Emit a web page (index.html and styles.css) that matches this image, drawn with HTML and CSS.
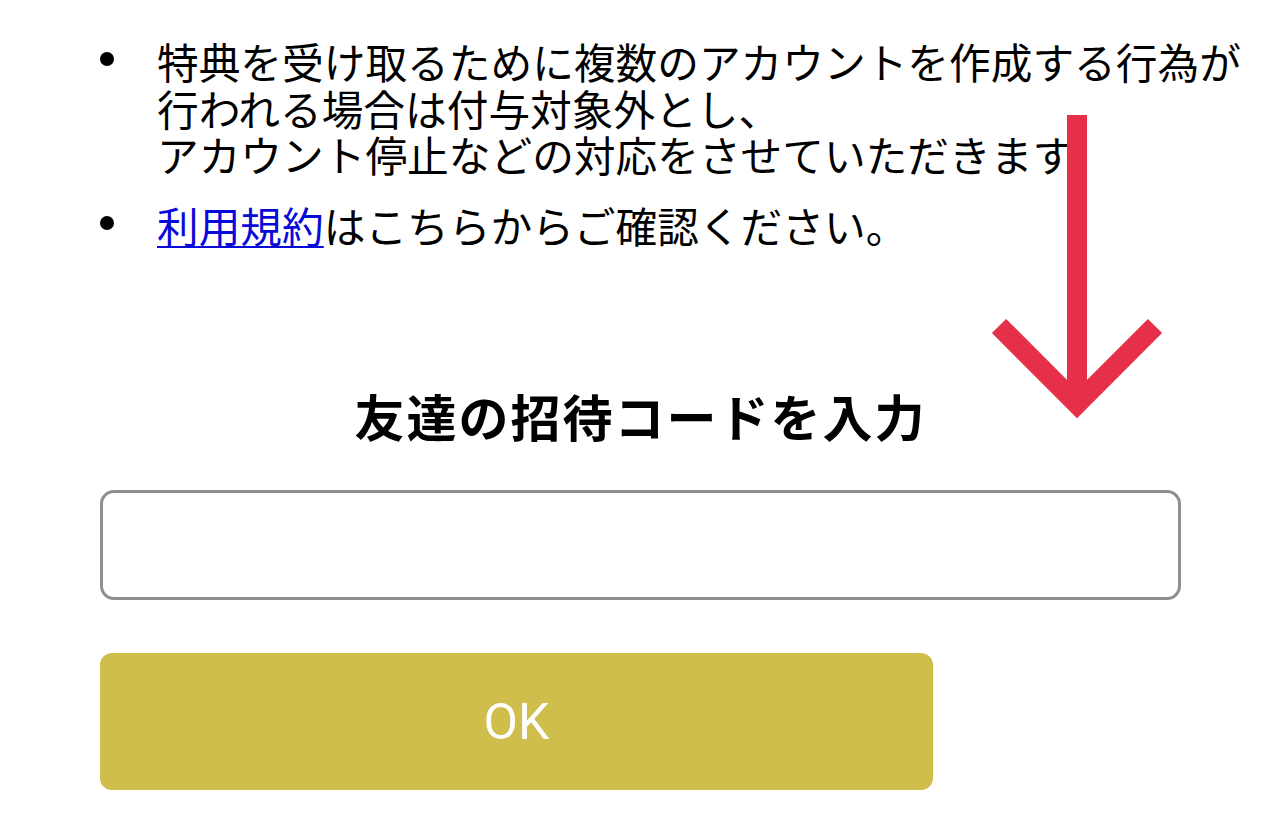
FILE: index.html
```html
<!DOCTYPE html>
<html lang="ja">

<head>
    <meta charset="UTF-8">
    <meta name="viewport" content="width=device-width, initial-scale=1.0">
    <title>友達の招待コード</title>
    <link rel="stylesheet" href="styles.css">
</head>

<body>
    <div class="page">
        <ul class="notes">
            <li>
                <span>特典を受け取るために複数のアカウントを作成する行為が<br>行われる場合は付与対象外とし、<br>アカウント停止などの対応をさせていただきます</span>
            </li>
            <li>
                <span><a href="#" class="notes-link">利用規約</a>はこちらからご確認ください。</span>
            </li>
        </ul>

        <div class="invite-form">
            <h2 class="invite-title">友達の招待コードを入力</h2>
            <input type="text" class="invite-input">
            <button class="invite-btn">OK</button>
        </div>

        <svg class="hint-arrow" width="200" height="330" viewBox="0 0 200 330">
            <line x1="97" y1="15" x2="97" y2="300" stroke="#e6304a" stroke-width="20" />
            <polyline points="19,226 97,304 175,226" fill="none" stroke="#e6304a" stroke-width="20"
                stroke-linejoin="miter" stroke-linecap="butt" />
        </svg>
    </div>
</body>

</html>
```

FILE: styles.css
```css
body {
    margin: 0;
    background: #fff;
    color: #000;
    font-family: "Noto Sans CJK JP", "Noto Sans", sans-serif;
}

.page {
    position: relative;
    width: 1280px;
    height: 838px;
    overflow: hidden;
}

.notes {
    list-style: none;
    margin: 38px 0 0 100px;
    padding: 0;
    font-size: 41.7px;
    line-height: 46.5px;
    white-space: nowrap;
}

.notes li {
    display: flex;
    align-items: flex-start;
}

.notes li + li {
    margin-top: 24px;
}

/* 黒丸 */
.notes li::before {
    content: "";
    flex-shrink: 0;
    width: 14px;
    height: 14px;
    margin-top: 14px;
    margin-right: 43px;
    border-radius: 50%;
    background: #000;
}

.notes-link {
    color: #0a0ad8;
    text-decoration: underline;
    text-decoration-thickness: 2px;
    text-underline-offset: 3px;
}

.invite-form {
    width: 1081px;
    margin: 137px 0 0 100px;
    display: flex;
    flex-direction: column;
    align-items: flex-start;
}

.invite-title {
    align-self: stretch;
    margin: 0;
    text-align: center;
    font-size: 50px;
    line-height: 60px;
    font-weight: bold;
    letter-spacing: 2px;
}

.invite-input {
    box-sizing: border-box;
    width: 100%;
    height: 110px;
    margin-top: 45px;
    border: 3px solid #8f8f8f;
    border-radius: 14px;
    background: #fff;
    outline: none;
}

.invite-btn {
    width: 833px;
    height: 137px;
    margin-top: 53px;
    border: none;
    border-radius: 12px;
    background-color: #cfbd4c;
    color: #fff;
    font-family: Roboto, "Noto Sans", sans-serif;
    font-size: 50px;
    font-weight: 400;
    cursor: pointer;
}

.hint-arrow {
    position: absolute;
    left: 980px;
    top: 100px;
}
```
